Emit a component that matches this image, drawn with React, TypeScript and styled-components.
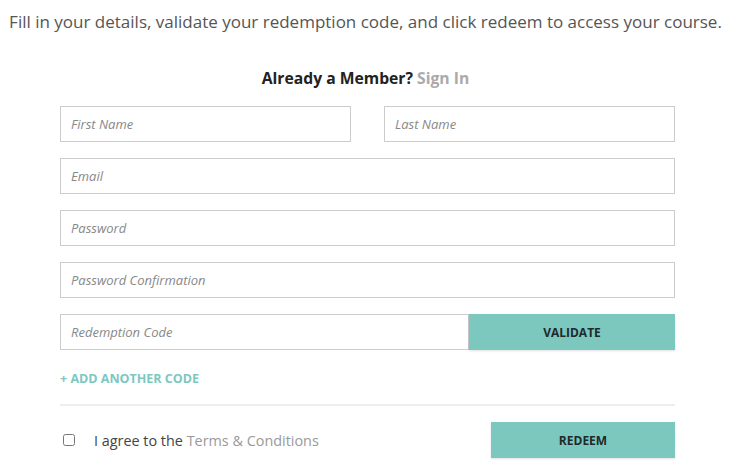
import styled, { createGlobalStyle } from 'styled-components';

const GlobalStyle = createGlobalStyle`
  body {
    margin: 0;
    background: #ffffff;
    font-family: "Open Sans", "Liberation Sans", sans-serif;
  }
`;

const Page = styled.div`
  width: 731px;
  height: 469px;
  overflow: hidden;
`;

const Intro = styled.p`
  margin: 0;
  padding-top: 10px;
  height: 24px;
  text-align: center;
  font-size: 17px;
  color: #555555;
`;

const MemberLine = styled.h3`
  margin: 33px 0 0 0;
  height: 24px;
  text-align: center;
  font-family: "Open Sans", "Liberation Sans", sans-serif;
  font-size: 15.7px;
  font-weight: 700;
  color: #222222;
`;

const SignIn = styled.a`
  color: #aaaaaa;
  text-decoration: none;
`;

const Form = styled.form`
  width: 615px;
  margin: 15px 0 0 60px;
  display: flex;
  flex-direction: column;
  gap: 16px;
`;

const Row = styled.div<{ $gap?: number }>`
  display: flex;
  gap: ${(p) => p.$gap ?? 0}px;
`;

const Input = styled.input<{ $grow?: boolean }>`
  flex: ${(p) => (p.$grow ? '1 1 0' : 'none')};
  min-width: 0;
  height: 36px;
  box-sizing: border-box;
  border: 1px solid #cccccc;
  border-radius: 0;
  padding: 0 10px;
  font-family: "Open Sans", "Liberation Sans", sans-serif;
  font-size: 13px;
  font-style: italic;
  color: #333333;
  outline: none;

  &::placeholder {
    color: #888888;
  }
`;

const TealButton = styled.button<{ $width: number }>`
  flex: none;
  width: ${(p) => p.$width}px;
  height: 36px;
  border: none;
  background: #7cc8bf;
  box-shadow: 0 1px 2px rgba(0, 0, 0, 0.12);
  font-family: "Open Sans", "Liberation Sans", sans-serif;
  font-size: 12px;
  font-weight: 700;
  color: #1f2a2a;
  cursor: pointer;
`;

const AddCode = styled.a`
  display: block;
  margin-top: 4px;
  font-family: "Open Sans", "Liberation Sans", sans-serif;
  font-size: 12.5px;
  font-weight: 700;
  color: #7cc8bf;
  text-decoration: none;
`;

const Divider = styled.hr`
  margin: 0;
  margin-top: 1px;
  border: none;
  border-top: 2px solid #eeeeee;
`;

const Footer = styled.div`
  display: flex;
  align-items: center;
  justify-content: space-between;
`;

const Agree = styled.label`
  display: flex;
  align-items: center;
  gap: 19px;
  padding-left: 3px;
  font-family: "Open Sans", "Liberation Sans", sans-serif;
  font-size: 14.4px;
  color: #444444;
`;

const Check = styled.input`
  margin: 0;
  width: 12px;
  height: 12px;
`;

const Terms = styled.a`
  color: #999999;
  text-decoration: none;
`;

export default function App() {
  return (
    <Page>
      <GlobalStyle />
      <Intro>Fill in your details, validate your redemption code, and click redeem to access your course.</Intro>
      <MemberLine>
        Already a Member? <SignIn href="#">Sign In</SignIn>
      </MemberLine>
      <Form onSubmit={(e) => e.preventDefault()}>
        <Row $gap={33}>
          <Input $grow placeholder="First Name" />
          <Input $grow placeholder="Last Name" />
        </Row>
        <Input placeholder="Email" />
        <Input placeholder="Password" type="password" />
        <Input placeholder="Password Confirmation" type="password" />
        <Row>
          <Input $grow placeholder="Redemption Code" />
          <TealButton type="button" $width={206}>VALIDATE</TealButton>
        </Row>
        <AddCode href="#">+ ADD ANOTHER CODE</AddCode>
        <Divider />
        <Footer>
          <Agree>
            <Check type="checkbox" />
            <span>
              I agree to the <Terms href="#">Terms &amp; Conditions</Terms>
            </span>
          </Agree>
          <TealButton type="submit" $width={184}>REDEEM</TealButton>
        </Footer>
      </Form>
    </Page>
  );
}
